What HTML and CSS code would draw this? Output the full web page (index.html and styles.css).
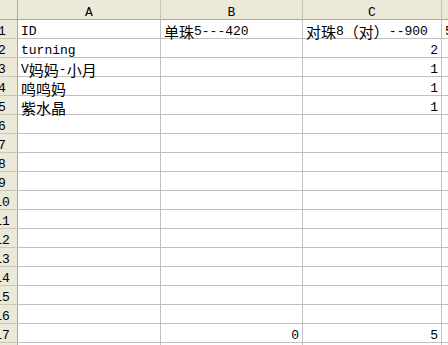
FILE: index.html
```html
<html><head><title>Sheet1</title>
<link rel="stylesheet" href="styles.css">
</head>
<body>
  <div class="sheet">
    <!-- column headers -->
    <div class="cell corner"></div>
    <div class="cell col-hd">A</div>
    <div class="cell col-hd">B</div>
    <div class="cell col-hd">C</div>
    <div class="cell col-hd"></div>

    <div class="cell row-hd">1</div>
    <div class="cell">ID</div>
    <div class="cell"><span class="zh">单珠</span>5---420</div>
    <div class="cell"><span class="zh">对珠</span>8<span class="zh">（对）</span>--900</div>
    <div class="cell">5</div>

    <div class="cell row-hd">2</div>
    <div class="cell">turning</div>
    <div class="cell"></div>
    <div class="cell num">2</div>
    <div class="cell"></div>

    <div class="cell row-hd">3</div>
    <div class="cell">V<span class="zh">妈妈</span>-<span class="zh">小月</span></div>
    <div class="cell"></div>
    <div class="cell num">1</div>
    <div class="cell"></div>

    <div class="cell row-hd">4</div>
    <div class="cell"><span class="zh">鸣鸣妈</span></div>
    <div class="cell"></div>
    <div class="cell num">1</div>
    <div class="cell"></div>

    <div class="cell row-hd">5</div>
    <div class="cell"><span class="zh">紫水晶</span></div>
    <div class="cell"></div>
    <div class="cell num">1</div>
    <div class="cell"></div>

    <div class="cell row-hd">6</div><div class="cell"></div><div class="cell"></div><div class="cell"></div><div class="cell"></div>
    <div class="cell row-hd">7</div><div class="cell"></div><div class="cell"></div><div class="cell"></div><div class="cell"></div>
    <div class="cell row-hd">8</div><div class="cell"></div><div class="cell"></div><div class="cell"></div><div class="cell"></div>
    <div class="cell row-hd">9</div><div class="cell"></div><div class="cell"></div><div class="cell"></div><div class="cell"></div>
    <div class="cell row-hd">10</div><div class="cell"></div><div class="cell"></div><div class="cell"></div><div class="cell"></div>
    <div class="cell row-hd">11</div><div class="cell"></div><div class="cell"></div><div class="cell"></div><div class="cell"></div>
    <div class="cell row-hd">12</div><div class="cell"></div><div class="cell"></div><div class="cell"></div><div class="cell"></div>
    <div class="cell row-hd">13</div><div class="cell"></div><div class="cell"></div><div class="cell"></div><div class="cell"></div>
    <div class="cell row-hd">14</div><div class="cell"></div><div class="cell"></div><div class="cell"></div><div class="cell"></div>
    <div class="cell row-hd">15</div><div class="cell"></div><div class="cell"></div><div class="cell"></div><div class="cell"></div>
    <div class="cell row-hd">16</div><div class="cell"></div><div class="cell"></div><div class="cell"></div><div class="cell"></div>

    <div class="cell row-hd">17</div>
    <div class="cell"></div>
    <div class="cell num">0</div>
    <div class="cell num">5</div>
    <div class="cell"></div>

    <div class="cell row-hd">18</div><div class="cell"></div><div class="cell"></div><div class="cell"></div><div class="cell"></div>
  </div>
</body>
</html>
```

FILE: styles.css
```css
body, html {
  margin: 0;
  padding: 0;
  background: #fff;
  color: #000;
  overflow: hidden;
}
.sheet {
  display: grid;
  grid-template-columns: 31px 143px 142px 139px 1fr;
  grid-template-rows: 20px;
  grid-auto-rows: 19px;
  margin-left: -13px;
  font-family: "Liberation Mono", "Noto Sans CJK SC", monospace;
  font-size: 13px;
}
.cell {
  box-sizing: border-box;
  border-right: 1px solid #c0c0c0;
  border-bottom: 1px solid #c0c0c0;
  padding: 0 3px;
  line-height: 12px;
  display: flex;
  align-items: flex-end;
  white-space: nowrap;
}
.zh {
  font-family: "Noto Sans CJK SC", sans-serif;
  font-size: 15px;
}
.num {
  justify-content: flex-end;
}
.corner, .col-hd, .row-hd {
  background: #ece9d8;
  border-color: #aca899;
  justify-content: center;
  padding: 0;
}
.col-hd {
  border-right-color: #c9c5b4;
}
.row-hd {
  border-bottom-color: #cbc7b8;
}
```
